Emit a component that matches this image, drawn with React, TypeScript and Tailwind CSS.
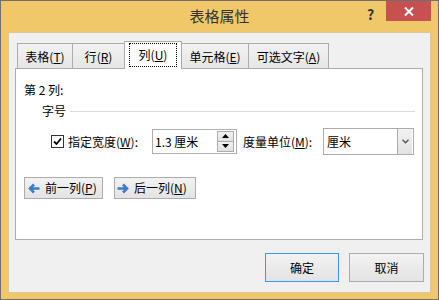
import React from 'react';

const tabs = [
  { label: '表格', key: 'T', w: 'w-[56px]', active: false },
  { label: '行', key: 'R', w: 'w-[53px]', active: false },
  { label: '列', key: 'U', w: 'w-[58px]', active: true },
  { label: '单元格', key: 'E', w: 'w-[68px]', active: false },
  { label: '可选文字', key: 'A', w: 'w-[81px]', active: false },
];

const Arrow = ({ dir }: { dir: 'left' | 'right' }) => (
  <svg width="12" height="11" viewBox="0 0 12 11" className="shrink-0">
    {dir === 'left' ? (
      <path d="M11.5 5.5H2.5M6 1.5L2 5.5L6 9.5" fill="none" stroke="#3d7cc9" strokeWidth="2.6" />
    ) : (
      <path d="M0.5 5.5H9.5M6 1.5L10 5.5L6 9.5" fill="none" stroke="#3d7cc9" strokeWidth="2.6" />
    )}
  </svg>
);

export default function App() {
  return (
    <div className="w-[439px] h-[300px] border border-[#707070] bg-[#f0c86a] flex flex-col font-['Noto_Sans_CJK_SC','Noto_Sans',sans-serif] text-[12px] text-black select-none">
      {/* title bar */}
      <div className="relative h-[31px] shrink-0 flex items-center justify-center">
        <span className="text-[15px] text-[#333] leading-[20px] -mt-[1px]">表格属性</span>
        <span className="absolute left-[366px] top-[3px] text-[14px] font-bold text-[#333] leading-[20px]">?</span>
        <div className="absolute left-[385px] top-0 w-[45px] h-[20px] bg-[#c75050] flex items-center justify-center">
          <svg width="10" height="9" viewBox="0 0 10 9">
            <path d="M1 0.5L9 8.5M9 0.5L1 8.5" stroke="#fff" strokeWidth="2" />
          </svg>
        </div>
      </div>

      {/* client area */}
      <div className="mx-[7px] h-[261px] bg-[#f0f0f0] border border-[#dcc896] pt-[8px] pl-[6px] flex flex-col">
        {/* tabs */}
        <div className="flex items-end h-[27px] ml-[2px]">
          {tabs.map((t, i) =>
            t.active ? (
              <div
                key={t.key}
                className={`${t.w} h-[28px] -mb-px -ml-px relative z-10 bg-white border border-b-0 border-[#acacac] px-[4px] pt-[1px] pb-[2px] flex`}
              >
                <div className="flex-1 border border-dotted border-black flex items-center justify-center leading-[16px]">
                  {t.label}(<u>{t.key}</u>)
                </div>
              </div>
            ) : (
              <div
                key={t.key}
                className={`${t.w} h-[25px] ${i > 0 ? '-ml-px' : ''} border border-b-0 border-[#acacac] bg-gradient-to-b from-[#f2f2f2] to-[#e6e6e6] flex items-center justify-center pt-[2px] leading-[16px]`}
              >
                {t.label}(<u>{t.key}</u>)
              </div>
            )
          )}
        </div>

        {/* panel */}
        <div className="w-[408px] h-[172px] shrink-0 border border-[#acacac] bg-white pt-[13px] pl-[8px] flex flex-col">
          <div className="leading-[16px]">第&nbsp;2&nbsp;列:</div>

          <div className="flex items-center mt-[5px] ml-[18px] h-[16px]">
            <span className="leading-[16px]">字号</span>
            <div className="flex-1 h-px bg-[#dcdcdc] ml-[4px] mr-[7px]" />
          </div>

          <div className="flex items-center mt-[9px] h-[27px] ml-[27px]">
            <div className="w-[13px] h-[13px] border border-[#333] bg-white flex items-center justify-center shrink-0">
              <svg width="9" height="9" viewBox="0 0 9 9">
                <path d="M1 4.5L3.5 7L8 1.5" fill="none" stroke="#000" strokeWidth="1.8" />
              </svg>
            </div>
            <span className="ml-[4px] w-[84px] leading-[16px] shrink-0">
              指定宽度(<u>W</u>):
            </span>
            <div className="w-[85px] h-[25px] border border-[#abadb3] bg-white flex items-stretch py-px pr-[2px] shrink-0">
              <span className="flex-1 pl-[2px] flex items-center leading-[16px]">1.3&nbsp;厘米</span>
              <div className="w-[17px] flex flex-col">
                <div className="h-[12px] border border-[#acacac] bg-gradient-to-b from-[#f2f2f2] to-[#e2e2e2] flex items-center justify-center">
                  <svg width="7" height="4" viewBox="0 0 7 4">
                    <path d="M0 4L3.5 0L7 4Z" fill="#000" />
                  </svg>
                </div>
                <div className="h-[12px] border border-t-0 border-[#acacac] bg-gradient-to-b from-[#f2f2f2] to-[#e2e2e2] flex items-center justify-center">
                  <svg width="7" height="4" viewBox="0 0 7 4">
                    <path d="M0 0L3.5 4L7 0Z" fill="#000" />
                  </svg>
                </div>
              </div>
            </div>
            <span className="ml-[6px] w-[80px] leading-[16px] shrink-0">
              度量单位(<u>M</u>):
            </span>
            <div className="w-[91px] h-[27px] border border-[#acacac] bg-white flex items-stretch shrink-0">
              <span className="flex-1 pl-[3px] flex items-center leading-[16px]">厘米</span>
              <div className="w-[15px] border-l border-[#acacac] bg-gradient-to-b from-[#f2f2f2] to-[#e2e2e2] flex items-center justify-center mr-px">
                <svg width="7" height="5" viewBox="0 0 7 5">
                  <path d="M0.5 0.8L3.5 3.8L6.5 0.8" fill="none" stroke="#555" strokeWidth="1.4" />
                </svg>
              </div>
            </div>
          </div>

          <div className="flex mt-[22px] gap-[11px]">
            <div className="w-[79px] h-[22px] border border-[#acacac] bg-gradient-to-b from-[#f2f2f2] to-[#e3e3e3] flex items-center pl-[3px] gap-[5px] leading-[16px]">
              <Arrow dir="left" />
              <span>
                前一列(<u>P</u>)
              </span>
            </div>
            <div className="w-[82px] h-[22px] border border-[#acacac] bg-gradient-to-b from-[#f2f2f2] to-[#e3e3e3] flex items-center pl-[2px] gap-[5px] leading-[16px]">
              <Arrow dir="right" />
              <span>
                后一列(<u>N</u>)
              </span>
            </div>
          </div>
        </div>

        {/* dialog buttons */}
        <div className="flex justify-end gap-[10px] mt-[13px] pr-[6px]">
          <div className="w-[74px] h-[29px] border border-[#3399ff] bg-gradient-to-b from-[#f2f2f2] to-[#e3e3e3] flex items-center justify-center leading-[16px]">
            确定
          </div>
          <div className="w-[75px] h-[29px] border border-[#acacac] bg-gradient-to-b from-[#f2f2f2] to-[#e3e3e3] flex items-center justify-center leading-[16px]">
            取消
          </div>
        </div>
      </div>
    </div>
  );
}
